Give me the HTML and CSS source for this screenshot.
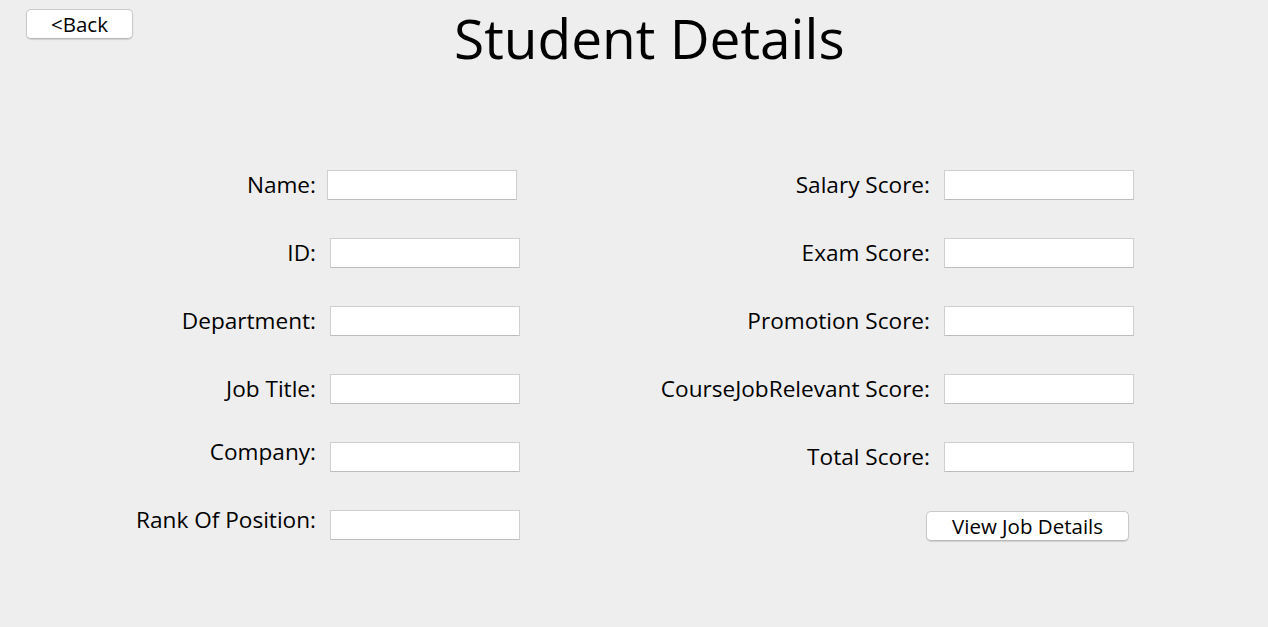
FILE: index.html
```html
<!DOCTYPE html>
<html lang="en">
<head>
<meta charset="utf-8">
<title>Student Details</title>
<link rel="stylesheet" href="styles.css">
</head>
<body>
<div class="page">
  <header class="header">
    <button class="btn btn-back" type="button">&lt;Back</button>
    <h1 class="title">Student Details</h1>
  </header>
  <main class="form">
    <label class="label">Name:</label>
    <input class="field field-name" type="text">
    <label class="label">Salary Score:</label>
    <input class="field" type="text">

    <label class="label">ID:</label>
    <input class="field" type="text">
    <label class="label">Exam Score:</label>
    <input class="field" type="text">

    <label class="label">Department:</label>
    <input class="field" type="text">
    <label class="label">Promotion Score:</label>
    <input class="field" type="text">

    <label class="label">Job Title:</label>
    <input class="field" type="text">
    <label class="label">CourseJobRelevant Score:</label>
    <input class="field" type="text">

    <label class="label label-raised">Company:</label>
    <input class="field" type="text">
    <label class="label">Total Score:</label>
    <input class="field" type="text">

    <label class="label label-raised">Rank Of Position:</label>
    <input class="field" type="text">
    <button class="btn btn-view" type="button">View Job Details</button>
  </main>
</div>
</body>
</html>
```

FILE: styles.css
```css
html, body {
  margin: 0;
  padding: 0;
  background: #eeeeee;
}

body {
  font-family: "Open Sans", "DejaVu Sans", sans-serif;
  color: #000000;
  width: 1268px;
  height: 627px;
  overflow: hidden;
}

.header {
  display: flex;
  align-items: flex-start;
  padding: 0 0 0 26px;
  height: 75px;
}

.btn {
  font-family: "Open Sans", "DejaVu Sans", sans-serif;
  color: #000000;
  background: #ffffff;
  border: 1px solid #c9c9c9;
  border-bottom-color: #b8b8b8;
  border-radius: 5px;
  box-shadow: 0 1px 1px rgba(0, 0, 0, 0.12);
  padding: 0;
  margin: 0;
  height: 30px;
  line-height: 26px;
  font-size: 20.5px;
  cursor: pointer;
}

.btn-back {
  width: 107px;
  margin-top: 9px;
}

.title {
  margin: 0 0 0 321px;
  font-weight: 400;
  font-size: 55px;
  line-height: normal;
  color: #000000;
}

.form {
  display: grid;
  grid-template-columns: 316px 190px 396px 190px;
  grid-auto-rows: 30px;
  column-gap: 14px;
  row-gap: 38px;
  margin-top: 95px;
}

.label {
  justify-self: end;
  align-self: center;
  font-size: 22.6px;
  line-height: 30px;
  white-space: nowrap;
}

.label-raised {
  margin-bottom: 11px;
}

.field {
  box-sizing: border-box;
  width: 190px;
  height: 30px;
  margin: 0;
  padding: 0 4px;
  background: #ffffff;
  border: 1px solid #cfcfcf;
  border-bottom-color: #bdbdbd;
  border-radius: 0;
  outline: none;
  font-family: "Open Sans", "DejaVu Sans", sans-serif;
  font-size: 18px;
}

.field-name {
  margin-left: -3px;
}

.btn-view {
  grid-column: 3 / 5;
  justify-self: end;
  width: 203px;
  margin-right: 5px;
  margin-top: 1px;
  margin-bottom: -1px;
}
```
